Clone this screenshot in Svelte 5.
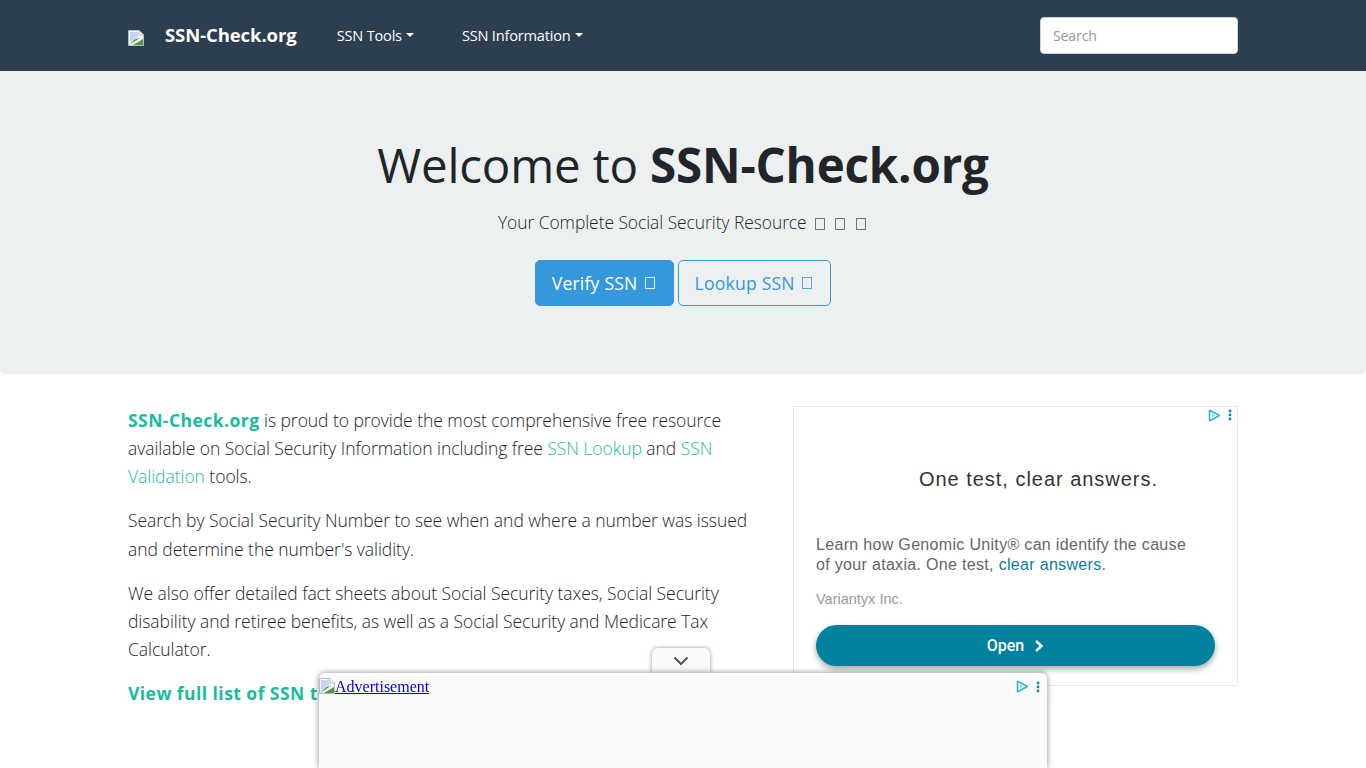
<script>
  const tools = 'SSN Tools';
  const info = 'SSN Information';
</script>

{#snippet broken()}
  <svg class="broken" width="16" height="16" viewBox="0 0 16 16" aria-hidden="true">
    <path d="M0.5 0.5H11L15.5 5V15.5H0.5Z" fill="#f4f6fb" stroke="#b9bcc2" />
    <path d="M11 0.5V5H15.5" fill="#fff" stroke="#b9bcc2" />
    <path d="M2 2H10V7L2 12Z" fill="#c4d5f5" />
    <path d="M1 15L6 10C9 8 12 8 15 9V15Z" fill="#4f9a3f" />
    <path d="M1 15L15 6V9L5 15Z" fill="#fff" />
  </svg>
{/snippet}

{#snippet adchoices()}
  <span class="adicons">
    <svg width="13" height="13" viewBox="0 0 13 13" aria-hidden="true">
      <path d="M1.5 1.2L11.5 6.5L1.5 11.8Z" fill="none" stroke="#33b5cf" stroke-width="1.6" stroke-linejoin="round" />
      <path d="M4 4.5L7.5 6.5L4 8.5Z" fill="#8fd6e4" />
    </svg>
    <svg width="4" height="12" viewBox="0 0 4 12" aria-hidden="true">
      <circle cx="2" cy="2" r="1.4" fill="#0a8aa8" />
      <circle cx="2" cy="6" r="1.4" fill="#0a8aa8" />
      <circle cx="2" cy="10" r="1.4" fill="#0a8aa8" />
    </svg>
  </span>
{/snippet}

<nav class="navbar">
  <div class="container nav-inner">
    <a class="brand" href="#top">
      {@render broken()}
      <span>SSN-Check.org</span>
    </a>
    <ul class="links">
      <li><a href="#tools">{tools}<i class="caret"></i></a></li>
      <li><a href="#info">{info}<i class="caret"></i></a></li>
    </ul>
    <input class="search" type="text" placeholder="Search" />
  </div>
</nav>

<header class="hero">
  <h1>Welcome to <b>SSN-Check.org</b></h1>
  <p class="lead">Your Complete Social Security Resource <i class="tofu"></i> <i class="tofu"></i> <i class="tofu"></i></p>
  <div class="actions">
    <a class="btn primary" href="#verify">Verify SSN <i class="tofu"></i></a>
    <a class="btn outline" href="#lookup">Lookup SSN <i class="tofu"></i></a>
  </div>
</header>

<main class="container columns">
  <section class="copy">
    <p><a class="strong" href="#top">SSN-Check.org</a> is proud to provide the most comprehensive free resource available on Social Security Information including free <a href="#lookup">SSN Lookup</a> and <a href="#verify">SSN Validation</a> tools.</p>
    <p>Search by Social Security Number to see when and where a number was issued and determine the number's validity.</p>
    <p>We also offer detailed fact sheets about Social Security taxes, Social Security disability and retiree benefits, as well as a Social Security and Medicare Tax Calculator.</p>
    <p><a class="strong" href="#tools">View full list of SSN tools</a></p>
  </section>
  <aside class="ad">
    <div class="ad-top">{@render adchoices()}</div>
    <h2>One test, clear answers.</h2>
    <p class="ad-body">Learn how Genomic Unity® can identify the cause of your ataxia. One test, <span>clear answers</span>.</p>
    <p class="ad-by">Variantyx Inc.</p>
    <a class="ad-btn" href="#open">Open
      <svg width="10" height="14" viewBox="0 0 10 14" aria-hidden="true"><path d="M2 2L7.5 7L2 12" fill="none" stroke="#fff" stroke-width="2.4" /></svg>
    </a>
  </aside>
</main>

<div class="sticky">
  <button class="tab" aria-label="Collapse">
    <svg width="16" height="10" viewBox="0 0 16 10" aria-hidden="true"><path d="M1.5 1.5L8 8L14.5 1.5" fill="none" stroke="#555" stroke-width="2" /></svg>
  </button>
  <div class="sticky-body">
    <a class="adlink" href="#ad">{@render broken()}Advertisement</a>
    <div class="sticky-icons">{@render adchoices()}</div>
  </div>
</div>

<style>
  :global(body) {
    margin: 0;
    background: #fff;
    color: #212529;
    font-family: "Open Sans", "Noto Sans", sans-serif;
    overflow: hidden;
  }
  .container {
    box-sizing: border-box;
    width: 1110px;
    margin: 0 auto;
  }
  a { text-decoration: none; }

  .navbar {
    height: 71px;
    background: #2c3e50;
    display: flex;
    align-items: center;
  }
  .nav-inner {
    display: flex;
    align-items: center;
  }
  .brand {
    display: flex;
    align-items: center;
    color: #fff;
    font-size: 18.5px;
    font-weight: 700;
    letter-spacing: -0.09px;
    gap: 21px;
    margin: 0 40px 2px 0;
  }
  .brand .broken { margin-top: 7px; }
  .links {
    display: flex;
    gap: 48px;
    list-style: none;
    margin: 0 0 2px;
    padding: 0;
    flex: 1;
  }
  .links a {
    color: #fff;
    font-size: 14.6px;
    letter-spacing: -0.2px;
    display: flex;
    align-items: center;
  }
  .caret {
    width: 0;
    height: 0;
    margin-left: 4px;
    border-top: 4.5px solid #fff;
    border-left: 4.5px solid transparent;
    border-right: 4.5px solid transparent;
  }
  .search {
    box-sizing: border-box;
    width: 198px;
    height: 37px;
    padding: 0 12px;
    border: 1px solid #ced4da;
    border-radius: 4px;
    background: #fff;
    font: 14.2px "Open Sans", sans-serif;
    letter-spacing: -0.2px;
  }
  .search::placeholder { color: #8f9aa1; opacity: 1; }

  .hero {
    box-sizing: border-box;
    height: 303px;
    padding-top: 61px;
    background: #ecf0f1;
    border-radius: 0 0 5px 5px;
    text-align: center;
  }
  h1 {
    margin: 0;
    font-size: 47.5px;
    font-weight: 400;
    line-height: 66px;
    letter-spacing: -0.18px;
    color: #212529;
  }
  h1 b { font-weight: 700; }
  .lead {
    margin: 9px 0 0;
    font-size: 17.4px;
    font-weight: 300;
    line-height: 30px;
    letter-spacing: -0.04px;
    color: #212529;
  }
  .tofu {
    display: inline-block;
    box-sizing: border-box;
    width: 10px;
    height: 12px;
    margin: 0 2.5px 0 3.5px;
    border: 1px solid rgba(33, 37, 41, 0.6);
    vertical-align: -1px;
  }
  .actions {
    display: flex;
    justify-content: center;
    gap: 4px;
    margin-top: 23px;
  }
  .btn {
    box-sizing: border-box;
    height: 46px;
    padding: 0 18px 0 16px;
    display: flex;
    align-items: center;
    gap: 3px;
    border: 1px solid #3498db;
    border-radius: 5px;
    font-size: 17.6px;
    letter-spacing: 0.2px;
  }
  .btn .tofu { margin: 0 0 0 4px; }
  .primary { background: #3498db; color: #fff; }
  .primary .tofu { border-color: rgba(255, 255, 255, 0.85); }
  .outline { color: #3498db; padding-right: 18.5px; }
  .outline .tofu { border-color: rgba(52, 152, 219, 0.8); }

  .columns {
    display: grid;
    grid-template-columns: 635px 445px;
    gap: 30px;
    padding-top: 32px;
  }
  .copy { font-weight: 300; font-size: 17.5px; line-height: 28.13px; letter-spacing: -0.05px; }
  .copy p { margin: 0 0 16px; }
  .copy a { color: #18bc9c; }
  .copy a.strong { font-weight: 700; letter-spacing: 0.45px; }

  .ad {
    box-sizing: border-box;
    height: 280px;
    border: 1px solid #e8e8e8;
    padding: 0 22px;
    font-family: "Liberation Sans", Arial, sans-serif;
    display: flex;
    flex-direction: column;
  }
  .ad-top {
    display: flex;
    justify-content: flex-end;
    height: 14px;
    margin: 1px -17px 0 0;
  }
  .adicons {
    display: flex;
    align-items: center;
    gap: 7px;
  }
  .ad h2 {
    margin: 43px 0 0 103px;
    font-size: 20px;
    font-weight: 400;
    line-height: 28px;
    letter-spacing: 0.97px;
    white-space: nowrap;
    color: #333;
  }
  .ad-body {
    margin: 42px 0 0;
    font-size: 16px;
    line-height: 20px;
    letter-spacing: 0.32px;
    color: #666;
    width: 378px;
  }
  .ad-body span { color: #0a7f9c; }
  .ad-by {
    margin: 14px 0 0;
    font-size: 14.5px;
    line-height: 20px;
    color: #999;
  }
  .ad-btn {
    margin-top: 16px;
    height: 41px;
    width: 399px;
    flex: none;
    border-radius: 21px;
    background: #00829e;
    color: #fff;
    font-family: Roboto, sans-serif;
    font-size: 16px;
    font-weight: 500;
    display: flex;
    align-items: center;
    justify-content: center;
    gap: 10px;
    box-shadow: 0 3px 6px rgba(0, 0, 0, 0.35);
  }

  .sticky {
    position: fixed;
    left: 319px;
    bottom: 0;
    width: 728px;
    height: 120px;
    display: flex;
    flex-direction: column;
  }
  .tab {
    align-self: flex-start;
    margin-left: 333px;
    box-sizing: border-box;
    width: 58px;
    height: 25px;
    padding: 0;
    border: 0;
    background: #fafafa;
    border-radius: 6px 6px 0 0;
    box-shadow: 0 0 4px rgba(0, 0, 0, 0.4);
    display: flex;
    align-items: center;
    justify-content: center;
    position: relative;
  }
  .sticky-body {
    position: relative;
    flex: 1;
    background: #fafafa;
    border-radius: 6px 6px 0 0;
    box-shadow: 0 0 6px rgba(0, 0, 0, 0.45);
  }
  .adlink {
    position: absolute;
    left: 0;
    top: 5px;
    display: flex;
    font: 16px/18px "Liberation Serif", "Times New Roman", serif;
    color: #0000ee;
    text-decoration: underline;
  }
  .sticky-icons {
    position: absolute;
    right: 7px;
    top: 7px;
  }
</style>
